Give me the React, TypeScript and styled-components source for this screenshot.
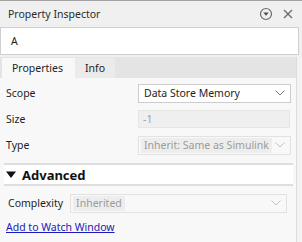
import React from 'react';
import styled, { createGlobalStyle } from 'styled-components';

const GlobalStyle = createGlobalStyle`
  html, body {
    margin: 0;
    padding: 0;
    background: #f0f0f0;
  }
  * {
    box-sizing: border-box;
  }
`;

interface RowProps {
  label: string;
  value: string;
  kind: 'select' | 'text' | 'disabledSelect';
}

const PropertyRow: React.FC<RowProps> = ({ label, value, kind }) => (
  <Row>
    <Label>{label}</Label>
    {kind === 'text' ? (
      <DisabledField>{value}</DisabledField>
    ) : (
      <Combo disabled={kind === 'disabledSelect'}>
        <ComboText disabled={kind === 'disabledSelect'}>{value}</ComboText>
        <Chevron disabled={kind === 'disabledSelect'} />
      </Combo>
    )}
  </Row>
);

const Chevron: React.FC<{ disabled?: boolean }> = ({ disabled }) => (
  <ChevronBox>
    <svg width="10" height="6" viewBox="0 0 10 6">
      <path d="M0.5 0.5 L5 5 L9.5 0.5" fill="none" stroke={disabled ? '#c4c4c4' : '#7a7a7a'} strokeWidth="1" />
    </svg>
  </ChevronBox>
);

const App: React.FC = () => {
  return (
    <Window>
      <GlobalStyle />
      <TitleBar>
        <Title>Property Inspector</Title>
        <TitleIcons>
          <svg width="14" height="14" viewBox="0 0 14 14">
            <circle cx="7" cy="7" r="5.5" fill="none" stroke="#6a6a6a" strokeWidth="1.2" />
            <path d="M4.3 5.6 L9.7 5.6 L7 8.8 Z" fill="#4a4a4a" />
          </svg>
          <svg width="10" height="10" viewBox="0 0 10 10">
            <path d="M1 1 L9 9 M9 1 L1 9" stroke="#6a6a6a" strokeWidth="1.3" />
          </svg>
        </TitleIcons>
      </TitleBar>
      <NameField>A</NameField>
      <Main>
        <Panel>
          <TabBar>
            <Tab active>Properties</Tab>
            <Tab>Info</Tab>
          </TabBar>
          <Body>
            <PropertyRow label="Scope" value="Data Store Memory" kind="select" />
            <PropertyRow label="Size" value="-1" kind="text" />
            <PropertyRow label="Type" value="Inherit: Same as Simulink" kind="disabledSelect" />
            <SectionHeader>
              <svg width="10" height="8" viewBox="0 0 10 8">
                <path d="M0 0.5 L10 0.5 L5 7 Z" fill="#111" />
              </svg>
              Advanced
            </SectionHeader>
            <AdvancedRow>
              <Label>Complexity</Label>
              <Combo disabled>
                <ComboText disabled>Inherited</ComboText>
                <Chevron disabled />
              </Combo>
            </AdvancedRow>
            <Link href="#">Add to Watch Window</Link>
          </Body>
        </Panel>
        <Track />
      </Main>
    </Window>
  );
};

export default App;

const Window = styled.div`
  width: 302px;
  height: 242px;
  display: flex;
  flex-direction: column;
  background: #f0f0f0;
  border-top: 1px solid #a3a3a3;
  font-family: 'Noto Sans', 'Open Sans', sans-serif;
  font-size: 10.5px;
  color: #1e1e1e;
  overflow: hidden;
`;

const TitleBar = styled.div`
  height: 26px;
  display: flex;
  align-items: center;
  justify-content: space-between;
  padding: 0 9px 0 8px;
`;

const Title = styled.div`
  color: #2b2b2b;
`;

const TitleIcons = styled.div`
  display: flex;
  align-items: center;
  gap: 10px;
`;

const NameField = styled.div`
  width: 299px;
  height: 28px;
  background: #fff;
  border: 1px solid #cfcfcf;
  display: flex;
  align-items: center;
  padding-left: 10px;
`;

const Main = styled.div`
  flex: 1;
  display: flex;
  margin-top: 2px;
`;

const Panel = styled.div`
  width: 297px;
  display: flex;
  flex-direction: column;
  border-right: 1px solid #dcdcdc;
`;

const Track = styled.div`
  flex: 1;
  background: #f3f3f3;
`;

const TabBar = styled.div`
  height: 21px;
  display: flex;
  padding-left: 2px;
  background: #e4e4e4;
`;

const Tab = styled.div<{ active?: boolean }>`
  display: flex;
  align-items: center;
  padding: 0 10px;
  background: ${p => (p.active ? '#f8f8f8' : '#ebebeb')};
  margin-top: 1px;
  ${p => (p.active ? 'min-width: 73px;' : 'min-width: 40px;')}
`;

const Body = styled.div`
  flex: 1;
  background: #f8f8f8;
  padding-top: 2px;
  display: flex;
  flex-direction: column;
`;

const Row = styled.div`
  height: 26px;
  display: flex;
  align-items: center;
  padding: 0 5px 0 6px;
`;

const Label = styled.div`
  flex: 1;
`;

const Combo = styled.div<{ disabled?: boolean }>`
  width: 153px;
  height: 19px;
  display: flex;
  align-items: center;
  padding: 0 2px;
  background: ${p => (p.disabled ? '#f8f8f8' : '#fff')};
  border: 1px solid ${p => (p.disabled ? '#e2e2e2' : '#cdcdcd')};
`;

const ComboText = styled.div<{ disabled?: boolean }>`
  flex: ${p => (p.disabled ? '0 1 auto' : '1')};
  padding: 0 3px;
  height: 15px;
  line-height: 15px;
  white-space: nowrap;
  overflow: hidden;
  color: ${p => (p.disabled ? '#9b9b9b' : '#1e1e1e')};
  background: ${p => (p.disabled ? '#ededed' : 'transparent')};
`;

const ChevronBox = styled.div`
  margin-left: auto;
  width: 16px;
  display: flex;
  justify-content: center;
`;

const DisabledField = styled.div`
  width: 152px;
  height: 18px;
  margin-right: 1px;
  display: flex;
  align-items: center;
  padding-left: 4px;
  background: #efefef;
  border: 1px solid #e6e6e6;
  color: #a0a0a0;
`;

const SectionHeader = styled.div`
  margin: 5px 3px 0 4px;
  height: 23px;
  display: flex;
  align-items: center;
  gap: 6px;
  padding-left: 2px;
  background: #fff;
  border-top: 2px solid #dedede;
  border-bottom: 2px solid #dedede;
  font-size: 13px;
  font-weight: 700;
  color: #111;
`;

const AdvancedRow = styled.div`
  height: 28px;
  margin-top: 3px;
  display: flex;
  align-items: center;
  padding: 0 9px 0 8px;
  gap: 7px;
  ${Label} {
    flex: 0 0 auto;
  }
  ${Combo} {
    flex: 1;
    width: auto;
  }
`;

const Link = styled.a`
  margin: 3px 0 0 6px;
  color: #1a1ab8;
  text-decoration: underline;
`;
